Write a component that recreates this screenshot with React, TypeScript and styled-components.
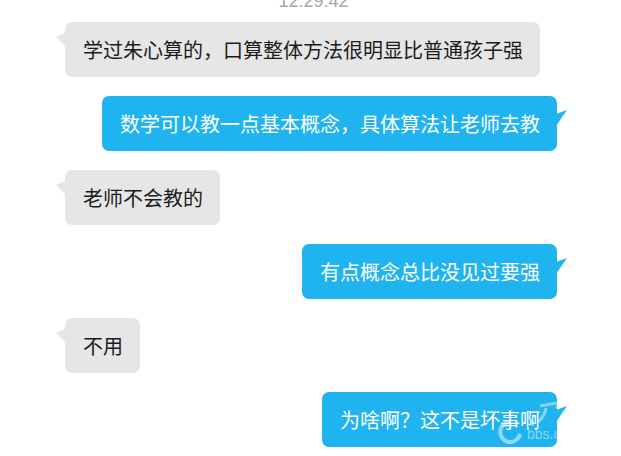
import React from 'react';
import styled, { createGlobalStyle } from 'styled-components';

const GlobalStyle = createGlobalStyle`
  html, body {
    margin: 0;
    padding: 0;
    background: #ffffff;
    overflow: hidden;
  }
  body {
    font-family: "Noto Sans CJK SC", "Liberation Sans", sans-serif;
  }
`

const Page = styled.div`
  position: relative;
  width: 621px;
  height: 456px;
  overflow: hidden;
  background: #ffffff;
`

const Timestamp = styled.div`
  margin: -8px 0 12px;
  text-align: center;
  font-family: "Liberation Sans", sans-serif;
  font-size: 18px;
  line-height: 18px;
  color: #a8a8a8;
  padding-left: 6px;
`

const Thread = styled.div`
  display: flex;
  flex-direction: column;
  gap: 19px;
`

const Row = styled.div<{ $mine?: boolean }>`
  display: flex;
  justify-content: ${p => (p.$mine ? 'flex-end' : 'flex-start')};
  padding: ${p => (p.$mine ? '0 64px 0 0' : '0 0 0 65px')};
`

const Bubble = styled.div<{ $mine?: boolean }>`
  position: relative;
  padding: 14px 17px 14px 18px;
  border-radius: 7px;
  font-size: 20px;
  line-height: 27px;
  white-space: nowrap;
  background: ${p => (p.$mine ? '#1fb4ef' : '#e6e6e6')};
  color: ${p => (p.$mine ? '#ffffff' : '#1c1c1c')};

  &::before {
    content: '';
    position: absolute;
    top: ${p => (p.$mine ? '14px' : '10px')};
    width: 11px;
    height: 16px;
    background: inherit;
    ${p =>
      p.$mine
        ? 'right: -10px; clip-path: polygon(0 4px, 100% 0, 0 100%);'
        : 'left: -9px; clip-path: polygon(100% 0, 0 5px, 100% 100%);'}
  }
`

const Watermark = styled.div`
  position: absolute;
  left: 496px;
  top: 400px;
  width: 90px;
  height: 48px;
  pointer-events: none;
`

const WatermarkText = styled.span`
  position: absolute;
  left: 31px;
  top: 26px;
  font-family: "Liberation Sans", sans-serif;
  font-size: 14px;
  color: rgba(255, 255, 255, 0.45);
`

const messages: { mine: boolean; text: string }[] = [
  { mine: false, text: '学过朱心算的，口算整体方法很明显比普通孩子强' },
  { mine: true, text: '数学可以教一点基本概念，具体算法让老师去教' },
  { mine: false, text: '老师不会教的' },
  { mine: true, text: '有点概念总比没见过要强' },
  { mine: false, text: '不用' },
  { mine: true, text: '为啥啊？这不是坏事啊' },
];

const App = () => {
  return (
    <Page>
      <GlobalStyle />
      <Timestamp>12.29.42</Timestamp>
      <Thread>
        {messages.map((m, i) => (
          <Row key={i} $mine={m.mine}>
            <Bubble $mine={m.mine}>{m.text}</Bubble>
          </Row>
        ))}
      </Thread>
      <Watermark>
        <svg width="90" height="48" viewBox="0 0 90 48">
          <path d="M14 22 A10 10 0 1 0 24 34" fill="none" stroke="rgba(255,255,255,0.5)" strokeWidth="4" />
          <path d="M44 6 L66 2 L60 8 M50 8 Q49 16 42 22" fill="none" stroke="rgba(255,255,255,0.45)" strokeWidth="3" />
        </svg>
        <WatermarkText>bbs.c</WatermarkText>
      </Watermark>
    </Page>
  );
};

export default App;
